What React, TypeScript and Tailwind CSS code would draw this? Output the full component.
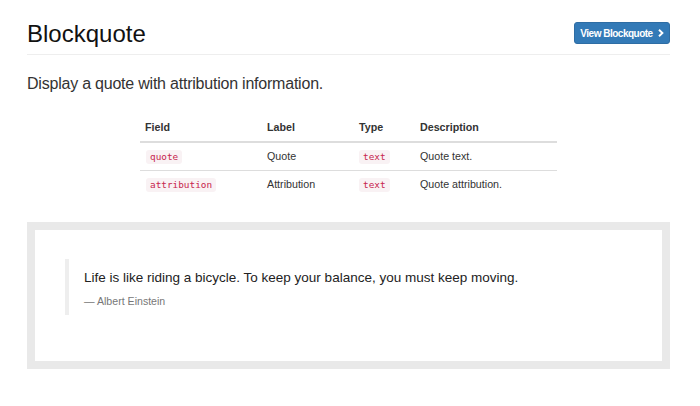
import React from "react";

const rows = [
  { field: "quote", label: "Quote", type: "text", desc: "Quote text." },
  { field: "attribution", label: "Attribution", type: "text", desc: "Quote attribution." },
];

function Code({ children }: { children: React.ReactNode }) {
  return (
    <code
      className="inline-block rounded-[3px] bg-[#f9f2f4] px-[4px] text-[9.4px] leading-[14px] text-[#c7254e]"
      style={{ fontFamily: '"DejaVu Sans Mono", "Liberation Mono", monospace' }}
    >
      {children}
    </code>
  );
}

export default function App() {
  return (
    <div
      className="min-h-[406px] w-[700px] bg-white pl-[27px] pr-[30px] text-[#333]"
      style={{ fontFamily: '"Liberation Sans", Arial, sans-serif' }}
    >
      <div className="flex items-start justify-between border-b border-[#eeeeee] pb-[7px] pt-[21px]">
        <h1 className="text-[24px] leading-[26px] font-normal text-[#111]">Blockquote</h1>
        <button className="mt-[1px] flex h-[22px] w-[96px] items-center justify-center gap-[4px] rounded-[3px] border border-[#2e6da4] bg-[#337ab7] text-[10px] font-bold tracking-[-0.5px] text-white">
          <span>View Blockquote</span>
          <svg width="6" height="8" viewBox="0 0 6 8" className="ml-[1px]">
            <path d="M1 0.8 L4.4 4 L1 7.2" stroke="white" strokeWidth="1.9" fill="none" />
          </svg>
        </button>
      </div>

      <p className="mt-[18px] text-[16px] leading-[22px] tracking-[-0.22px] text-[#333]">
        Display a quote with attribution information.
      </p>

      <div className="mt-[19px] flex justify-center">
        <table className="w-[417px] table-fixed border-collapse text-left text-[10.7px] leading-[17px]">
          <colgroup>
            <col className="w-[122px]" />
            <col className="w-[92px]" />
            <col className="w-[61px]" />
            <col className="w-[142px]" />
          </colgroup>
          <thead>
            <tr className="border-b-2 border-[#dddddd]">
              <th className="px-[5px] py-[5px] font-bold text-[#333]">Field</th>
              <th className="px-[5px] py-[5px] font-bold text-[#333]">Label</th>
              <th className="px-[5px] py-[5px] font-bold text-[#333]">Type</th>
              <th className="px-[5px] py-[5px] font-bold text-[#333]">Description</th>
            </tr>
          </thead>
          <tbody>
            {rows.map((r, i) => (
              <tr key={r.field} className={i === 0 ? "border-b border-[#dddddd]" : ""}>
                <td className="px-[5px] py-[5px] pl-[6px]">
                  <Code>{r.field}</Code>
                </td>
                <td className="px-[5px] py-[5px]">{r.label}</td>
                <td className="px-[5px] py-[5px]">
                  <Code>{r.type}</Code>
                </td>
                <td className="px-[5px] py-[5px]">{r.desc}</td>
              </tr>
            ))}
          </tbody>
        </table>
      </div>

      <div className="mt-[24px] border-[8px] border-[#e9e9e9] bg-white pb-[46px] pl-[30px] pr-[30px] pt-[29px]">
        <blockquote className="border-l-4 border-[#eeeeee] pb-[6px] pl-[15px] pt-[9px]">
          <p className="text-[13.5px] leading-[20px] text-[#222]">
            Life is like riding a bicycle. To keep your balance, you must keep moving.
          </p>
          <footer className="mt-[5px] text-[10.6px] leading-[16px] text-[#777]">— Albert Einstein</footer>
        </blockquote>
      </div>
    </div>
  );
}
